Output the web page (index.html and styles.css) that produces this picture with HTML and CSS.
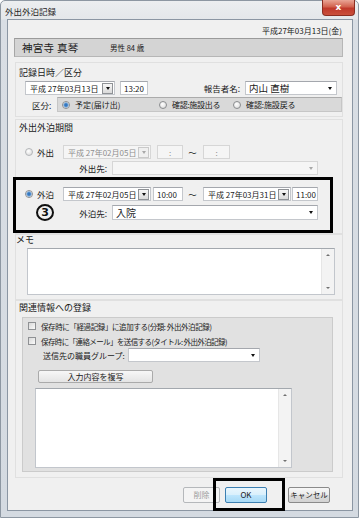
FILE: index.html
```html
<!DOCTYPE html>
<html lang="ja">
<head>
<meta charset="utf-8">
<title>外出外泊記録</title>
<link rel="stylesheet" href="styles.css">
</head>
<body>
<div class="window">
  <div class="titlebar">
    <span class="title">外出外泊記録</span>
    <span class="close">x</span>
  </div>
  <div class="client">
    <div class="date-row">平成27年03月13日(金)</div>
    <div class="patient"><span class="pname">神宮寺 真琴</span><span class="pinfo">男性 84 歳</span></div>

    <div class="sec sec1">
      <div class="sec-label">記録日時／区分</div>
      <div class="row r-rec">
        <div class="field dp w-rec"><span>平成 27年03月13日</span><span class="dd-btn"><i class="tri"></i></span></div>
        <div class="field tb w-time">13:20</div>
        <span class="rep-lbl">報告者名:</span>
        <div class="field combo w-rep"><span class="rep-name">内山 直樹</span><i class="tri"></i></div>
      </div>
      <div class="row r-kbn">
        <span class="kbn-lbl">区分:</span>
        <div class="radio-panel">
          <span class="rd rd1"><span class="radio on"></span>予定(届け出)</span>
          <span class="rd rd2"><span class="radio"></span>確認:施設出る</span>
          <span class="rd rd3"><span class="radio"></span>確認:施設戻る</span>
        </div>
      </div>
    </div>

    <div class="sec sec2">
      <div class="sec-label">外出外泊期間</div>
      <div class="row r-per r-go">
        <span class="radio dim"></span><span class="rl">外出</span>
        <div class="field dp dis w-date"><span>平成 27年02月05日</span><span class="dd-btn"><i class="tri"></i></span></div>
        <div class="field tb dis ctr w-t1">:</div>
        <span class="tilde">〜</span>
        <div class="field tb dis ctr w-t2">:</div>
      </div>
      <div class="row r-dest">
        <span class="dest-lbl"><span>外出先:</span></span>
        <div class="field combo dis w-dest"><span></span><i class="tri"></i></div>
      </div>
      <div class="hl-box">
        <div class="row r-per r-stay">
          <span class="radio on"></span><span class="rl">外泊</span>
          <div class="field dp w-date"><span>平成 27年02月05日</span><span class="dd-btn"><i class="tri"></i></span></div>
          <div class="field tb w-t1b">10:00</div>
          <span class="tilde">〜</span>
          <div class="field dp w-date2"><span>平成 27年03月31日</span><span class="dd-btn"><i class="tri"></i></span></div>
          <div class="field tb w-t3">11:00</div>
        </div>
        <div class="row r-dest2">
          <span class="dest-lbl"><span class="num">3</span><span>外泊先:</span></span>
          <div class="field combo w-dest2"><span class="big">入院</span><i class="tri"></i></div>
        </div>
      </div>
    </div>

    <div class="sec sec3">
      <div class="sec-label memo-lbl">メモ</div>
      <div class="textarea memo"><div class="ta-body"></div><div class="vscroll"><i class="up"></i><i class="down"></i></div></div>
    </div>

    <div class="sec sec4">
      <div class="sec-label">関連情報への登録</div>
      <div class="panel">
        <div class="row cb-row"><span class="cb"></span>保存時に「経過記録」に追加する(分類: 外出外泊記録)</div>
        <div class="row cb-row cb2"><span class="cb"></span>保存時に「連絡メール」を送信する(タイトル: 外出外泊記録)</div>
        <div class="row grp-row"><span class="grp-lbl">送信先の職員グループ:</span><div class="field combo w-grp"><span></span><i class="tri"></i></div></div>
        <div class="btn copy-btn">入力内容を複写</div>
        <div class="textarea mail"><div class="ta-body"></div><div class="vscroll"><i class="up"></i><i class="down"></i></div></div>
      </div>
    </div>

    <div class="btn-row">
      <div class="btn del">削除</div>
      <div class="btn ok">OK<span class="hl-ok"></span></div>
      <div class="btn cancel">キャンセル</div>
    </div>
  </div>
</div>
</body>
</html>
```

FILE: styles.css
```css
* { box-sizing: border-box; margin: 0; padding: 0; }
html, body { width: 359px; height: 518px; overflow: hidden; }
body {
  font-family: "Noto Sans CJK JP", "Noto Sans", sans-serif;
  font-size: 8.5px;
  color: #1a1a1a;
  background: #fff;
}
.window {
  width: 359px;
  height: 518px;
  display: flex;
  flex-direction: column;
  padding: 0 5px 6px 6px;
  border: 1px solid #8d97a2;
  border-radius: 5px 5px 0 0;
  background: linear-gradient(180deg, #eceef0 0, #e4e7ea 18px, #d9dee4 19px, #d4dae1 100%);
}
.titlebar {
  height: 18px;
  display: flex;
  justify-content: space-between;
  align-items: flex-start;
}
.title {
  margin-left: -2px;
  font-size: 8.5px;
  line-height: 20px;
  color: #1e1e1e;
}
.close {
  width: 33px;
  height: 16px;
  margin: -1px -2px 0 0;
  background: linear-gradient(180deg, #e9a596 0, #d2624f 45%, #c0392b 55%, #c9503c 100%);
  border: 1px solid #8b2d21;
  border-top: none;
  border-radius: 0 0 4px 4px;
  color: #fff;
  font: bold 9px/14px "DejaVu Sans", sans-serif;
  text-align: center;
}
.client {
  flex: 1;
  display: flex;
  flex-direction: column;
  background: #f0f0f0;
  border: 1px solid #8b96a3;
}
.date-row {
  margin-top: 3px;
  height: 15px;
  line-height: 15px;
  text-align: right;
  padding-right: 10px;
  font-size: 8px;
}
.patient {
  height: 19px;
  margin: 0 9px 0 6px;
  display: flex;
  align-items: center;
  background: #d4d4d4;
  border: 1px solid #b6b6b6;
  border-top-color: #9a9a9a;
  border-left-color: #a6a6a6;
  padding-left: 7px;
}
.pname { width: 88px; font-size: 10.5px; letter-spacing: 0.3px; }
.pinfo { font-size: 7.5px; }

.sec { margin: 0 9px 0 7px; border: 1px solid #e0e0e0; }
.sec-label { height: 14px; line-height: 14px; padding-left: 3px; font-size: 9px; }
.sec1 { margin-top: 5px; padding: 3px 0 4px; }
.sec2 { margin-top: 2px; padding-top: 1px; }
.sec3 { padding-bottom: 4px; }
.sec4 { padding-bottom: 5px; }
.memo-lbl { height: 9px; line-height: 9px; margin-left: -3px; }

.row { display: flex; align-items: center; }

.field {
  height: 14px;
  display: flex;
  align-items: center;
  background: #fff;
  border: 1px solid #c4c7cc;
  border-top-color: #a4a7ad;
  flex: none;
  white-space: nowrap;
}
.dp { padding-left: 4px; justify-content: space-between; font-size: 8px; }
.dd-btn {
  width: 11px;
  height: 11px;
  margin-right: 1px;
  border: 1px solid #8f9296;
  background: linear-gradient(180deg, #f7f7f7, #dadada);
  display: flex;
  align-items: center;
  justify-content: center;
}
.tri {
  display: block;
  width: 0;
  height: 0;
  border-left: 2.5px solid transparent;
  border-right: 2.5px solid transparent;
  border-top: 3px solid #111;
}
.tb { padding-left: 3px; font-size: 8px; }
.ctr { justify-content: center; padding-left: 0; }
.combo { justify-content: space-between; padding: 0 4px 0 3px; }
.dis { background: #f5f5f5; border-color: #d6d6d6; color: #8e8e8e; }
.dis .dd-btn { border-color: #c9c9c9; background: #efefef; }
.dis .tri { border-top-color: #a8a8a8; }

.r-rec { margin-top: 1px; height: 14px; padding-right: 5px; }
.w-rec { margin-left: 9px; width: 90px; }
.w-time { margin-left: 5px; width: 28px; }
.rep-lbl { margin-left: auto; }
.w-rep { margin-left: 5px; width: 92px; }
.rep-name { font-size: 9.5px; }

.r-kbn { margin-top: 2px; height: 15px; padding-left: 16px; }
.kbn-lbl { width: 25px; }
.radio-panel {
  flex: 1;
  height: 15px;
  display: flex;
  align-items: center;
  padding-left: 4px;
  background: #d9d9d9;
  border: 1px solid #c6c6c6;
  border-top-color: #ababab;
  font-size: 8px;
}
.rd { display: flex; align-items: center; white-space: nowrap; }
.rd1 { width: 97px; }
.rd2 { width: 74px; letter-spacing: -0.3px; }
.rd3 { letter-spacing: -0.1px; }

.radio {
  width: 8px;
  height: 8px;
  border-radius: 50%;
  border: 1px solid #8b8d90;
  background: radial-gradient(circle at 40% 35%, #ffffff 0, #e6e6e6 60%, #cfcfcf 100%);
  flex: none;
  margin-right: 5px;
}
.radio.on {
  background: radial-gradient(circle, #2d6cb5 0, #3f82c8 1.4px, #a9c7e6 2.6px, #eef2f6 3px);
}
.radio.dim { border-color: #b4b6b9; }

.r-per { height: 14px; padding-left: 9px; }
.r-per .radio { margin-right: 4px; }
.r-go { margin-top: 10px; }
.rl { width: 26px; }
.w-date { width: 88px; }
.w-t1 { margin-left: 6px; width: 26px; }
.w-t1b { margin-left: 2px; width: 30px; }
.tilde { width: 9px; margin: 0 6px 0 5px; text-align: center; }
.w-t2 { width: 27px; }
.w-date2 { width: 88px; }
.w-t3 { margin-left: 1px; width: 26px; }

.r-dest { margin-top: 2px; height: 14px; }
.dest-lbl {
  width: 96px;
  padding-right: 5px;
  display: flex;
  justify-content: flex-end;
  align-items: center;
  flex: none;
}
.w-dest { width: 206px; height: 14px; }
.w-dest2 { width: 206px; height: 15px; }
.big { font-size: 10px; }

.hl-box {
  margin: 2px 9px 0 -3px;
  border: 3px solid #000;
  padding: 7px 0 10px;
}
.r-dest2 { margin-top: 4px; height: 15px; }
.r-dest2 .dest-lbl { justify-content: space-between; padding-left: 20px; }
.num {
  width: 18px;
  height: 17px;
  border: 2px solid #111;
  border-radius: 50%;
  display: flex;
  align-items: center;
  justify-content: center;
  font: bold 11px/1 "DejaVu Sans", sans-serif;
  color: #111;
}

.textarea {
  display: flex;
  background: #fff;
  border: 1px solid #c2c6cc;
  border-top-color: #a3a8ae;
}
.ta-body { flex: 1; }
.vscroll {
  width: 13px;
  background: #f3f3f3;
  border-left: 1px solid #e6e6e6;
  display: flex;
  flex-direction: column;
  justify-content: space-between;
  align-items: center;
  padding: 5px 0;
}
.vscroll .up, .vscroll .down {
  display: block;
  width: 0;
  height: 0;
  border-left: 2px solid transparent;
  border-right: 2px solid transparent;
}
.vscroll .up { border-bottom: 2.5px solid #707070; }
.vscroll .down { border-top: 2.5px solid #707070; }
.memo { margin: 4px 7px 0 11px; height: 47px; }

.panel {
  margin: 2px 9px 0 6px;
  background: #e1e1e1;
  border: 1px solid #cbcbcb;
  padding: 2px 0 3px 5px;
}
.cb-row { height: 12px; font-size: 7.5px; letter-spacing: -0.4px; white-space: nowrap; }
.cb2 { margin-top: 3px; letter-spacing: -0.6px; }
.cb {
  width: 8px;
  height: 8px;
  border: 1px solid #8f9194;
  background: linear-gradient(135deg, #d8d8d8, #fbfbfb);
  margin-right: 5px;
  flex: none;
}
.grp-row { margin-top: 1px; height: 14px; font-size: 8px; }
.grp-lbl { margin-left: 15px; width: 85px; white-space: nowrap; }
.w-grp { width: 132px; }

.btn {
  display: flex;
  align-items: center;
  justify-content: center;
  border: 1px solid #8a8a8a;
  border-radius: 2px;
  background: linear-gradient(180deg, #f6f6f6 0, #ebebeb 50%, #dcdcdc 51%, #d2d2d2 100%);
  font-size: 8px;
  white-space: nowrap;
}
.copy-btn {
  margin: 8px 0 0 10px;
  width: 115px;
  height: 13px;
  border-color: #aaaaaa;
  background: linear-gradient(180deg, #f7f7f7, #e4e4e4);
}
.mail { margin: 5px 0 0 7px; width: 257px; height: 80px; }

.btn-row {
  flex: 1;
  display: flex;
  justify-content: flex-end;
  align-items: center;
  padding: 1px 22px 0 0;
}
.btn-row .btn { height: 16px; }
.del {
  width: 37px;
  margin-right: 5px;
  background: #f4f4f4;
  border-color: #b5b8bb;
  color: #9c9c9c;
}
.ok {
  position: relative;
  width: 42px;
  margin-right: 21px;
  border-color: #3c7fb1;
  background: linear-gradient(180deg, #eaf6fd 0, #d9f0fc 50%, #bee6fd 51%, #a7d9f5 100%);
}
.hl-ok {
  position: absolute;
  left: -13px;
  right: -19px;
  top: -10px;
  bottom: -9px;
  border: 3px solid #000;
}
.cancel { width: 42px; font-size: 7.5px; }
```
